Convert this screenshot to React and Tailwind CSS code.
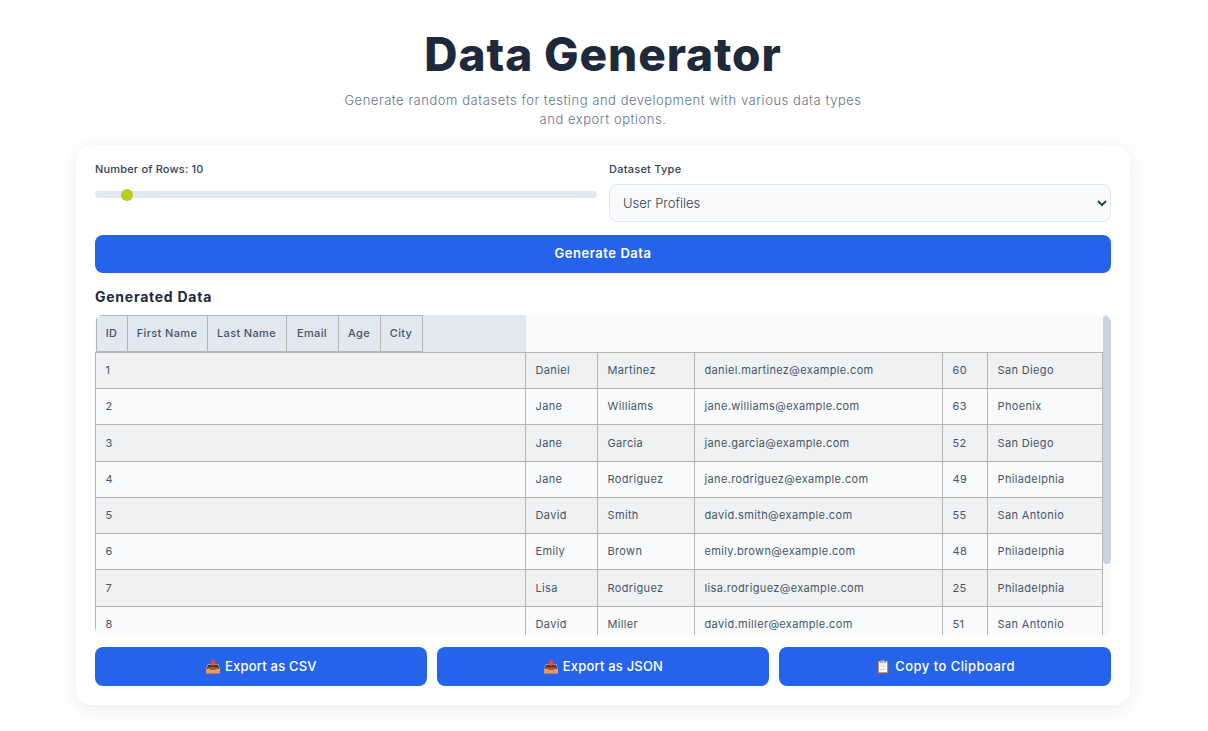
const rows = [
  [1, "Daniel", "Martinez", "daniel.martinez@example.com", 60, "San Diego"],
  [2, "Jane", "Williams", "jane.williams@example.com", 63, "Phoenix"],
  [3, "Jane", "Garcia", "jane.garcia@example.com", 52, "San Diego"],
  [4, "Jane", "Rodriguez", "jane.rodriguez@example.com", 49, "Philadelphia"],
  [5, "David", "Smith", "david.smith@example.com", 55, "San Antonio"],
  [6, "Emily", "Brown", "emily.brown@example.com", 48, "Philadelphia"],
  [7, "Lisa", "Rodriguez", "lisa.rodriguez@example.com", 25, "Philadelphia"],
  [8, "David", "Miller", "david.miller@example.com", 51, "San Antonio"],
];
const heads = [
  ["ID", "w-[31px]"],
  ["First Name", "w-[80px]"],
  ["Last Name", "w-[79px]"],
  ["Email", "w-[52px]"],
  ["Age", "w-[42px]"],
  ["City", "w-[42px]"],
];

export default function App() {
  return (
    <div className="min-h-[731px] w-[1206px] bg-white pt-[26px] font-['Inter',sans-serif] text-[#1e293b]">
      <h1 className="text-center text-[46px] font-extrabold leading-[56px] tracking-[0.9px] text-[#1e293b]">Data Generator</h1>
      <p className="mt-[9px] text-center text-[13px] font-light leading-[18.5px] tracking-[0.54px] text-[#64748b]">
        Generate random datasets for testing and development with various data types<br />and export options.
      </p>
      <main className="mx-auto mt-[17px] flex h-[560px] w-[1054px] flex-col rounded-2xl bg-white px-[19px] pt-[16px] shadow-[0_4px_20px_rgba(0,0,0,0.08)]">
        <div className="grid grid-cols-2 gap-3">
          <div>
            <label className="block text-[11px] font-medium leading-[16px] tracking-[0.18px] text-[#334155]">Number of Rows: 10</label>
            <input
              type="range"
              min="5"
              max="100"
              defaultValue="10"
              className="mt-[14px] block h-[7px] w-full cursor-pointer appearance-none rounded bg-[#e2e8f0] [&::-webkit-slider-thumb]:h-3 [&::-webkit-slider-thumb]:w-3 [&::-webkit-slider-thumb]:appearance-none [&::-webkit-slider-thumb]:rounded-full [&::-webkit-slider-thumb]:bg-[#b5d020]"
            />
          </div>
          <div>
            <label className="block text-[11px] font-medium leading-[16px] tracking-[0.25px] text-[#334155]">Dataset Type</label>
            <select className="mt-[7px] block h-[38px] w-full rounded-lg border border-[#e2e8f0] bg-[#f8fafc] pb-px pl-[9px] text-[13px] font-light text-[#334155]">
              <option>User Profiles</option>
              <option>Products</option>
              <option>Transactions</option>
            </select>
          </div>
        </div>
        <button className="mt-[13px] h-[38px] shrink-0 rounded-lg bg-[#2563eb] text-[13px] font-semibold tracking-[0.55px] text-white">Generate Data</button>
        <h3 className="mt-[15px] text-[14px] font-bold leading-[18px] tracking-[0.75px] text-[#1e293b]">Generated Data</h3>
        <div className="relative mt-[9px] h-[320px] shrink-0 overflow-hidden rounded-lg bg-[#f8fafc]">
          <table className="w-[1008px] table-fixed border-collapse text-[11px] tracking-[0.35px] text-[#475569]">
            <colgroup>
              <col className="w-[430px]" />
              <col className="w-[72px]" />
              <col className="w-[97px]" />
              <col className="w-[248px]" />
              <col className="w-[45px]" />
              <col />
            </colgroup>
            <thead className="block bg-[#e2e8f0]">
              <tr>
                {heads.map(([h, w]) => (
                  <th key={h} className={`${w} h-[35.75px] border border-[#b3b4b6] px-0 text-center text-[11px] font-medium text-[#475569]`}>{h}</th>
                ))}
              </tr>
            </thead>
            <tbody>
              {rows.map((r, i) => (
                <tr key={r[0]} className={i % 2 === 0 ? "bg-[#eff1f3]" : "bg-[#f8fafc]"}>
                  {r.map((c, j) => (
                    <td key={j} className="h-[36.25px] border border-[#b3b4b6] py-0 pl-[9.5px] pr-0">{c}</td>
                  ))}
                </tr>
              ))}
            </tbody>
          </table>
          <div className="absolute right-0 top-0 h-[249px] w-2 rounded bg-[#cbd5e1]" />
        </div>
        <div className="mt-3 grid grid-cols-3 gap-[10px]">
          <button className="h-[39px] rounded-lg bg-[#2563eb] text-[13px] font-medium tracking-[0.2px] text-white">📥 Export as CSV</button>
          <button className="h-[39px] rounded-lg bg-[#2563eb] text-[13px] font-medium tracking-[0.2px] text-white">📥 Export as JSON</button>
          <button className="h-[39px] rounded-lg bg-[#2563eb] text-[13px] font-medium tracking-[0.45px] text-white">📋 Copy to Clipboard</button>
        </div>
      </main>
    </div>
  );
}
